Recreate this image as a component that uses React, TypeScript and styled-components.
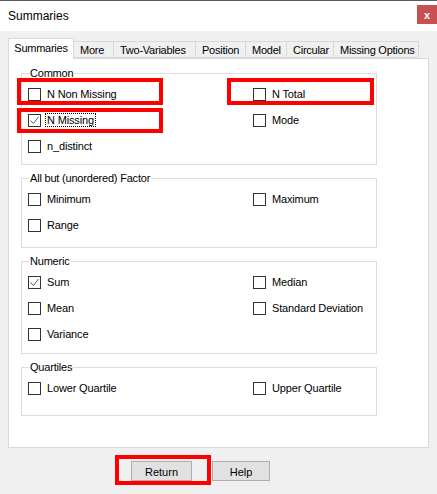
import React from 'react';
import styled, { createGlobalStyle } from 'styled-components';

const GlobalStyle = createGlobalStyle`
  html, body {
    margin: 0;
    padding: 0;
    background: #f0f0f0;
  }
  body {
    font-family: "Liberation Sans", Arial, sans-serif;
    font-size: 11px;
    color: #000;
  }
`;

const Window = styled.div`
  position: relative;
  width: 437px;
  height: 494px;
  box-sizing: border-box;
  border-top: 1px solid #5c5c5c;
  background: #f0f0f0;
  overflow: hidden;
`;

const TitleBar = styled.div`
  height: 30px;
  background: #fff;
  display: flex;
  align-items: center;
  justify-content: space-between;
  padding-left: 8px;
  font-size: 12px;
`;

const CloseButton = styled.div`
  width: 20px;
  height: 19px;
  margin-top: -3px;
  background: #c75050;
  color: #fff;
  font-weight: bold;
  font-size: 11px;
  display: flex;
  align-items: center;
  justify-content: center;
`;

const Body = styled.div`
  padding: 7px 8px 0 8px;
`;

const TabStrip = styled.div`
  display: flex;
  align-items: flex-end;
  height: 20px;
  position: relative;
  z-index: 1;
`;

const Tab = styled.div<{ $w: number; $active?: boolean }>`
  box-sizing: border-box;
  width: ${p => p.$w}px;
  height: ${p => (p.$active ? 21 : 17)}px;
  margin-bottom: ${p => (p.$active ? -1 : 0)}px;
  border: 1px solid #d9d9d9;
  border-bottom: ${p => (p.$active ? 'none' : '1px solid #d9d9d9')};
  border-left: ${p => (p.$active ? '1px solid #d9d9d9' : 'none')};
  background: ${p => (p.$active ? '#fff' : '#f0f0f0')};
  display: flex;
  align-items: center;
  justify-content: ${p => (p.$active ? 'center' : 'flex-start')};
  padding-left: ${p => (p.$active ? 0 : 6)}px;
  padding-bottom: ${p => (p.$active ? 3 : 0)}px;
  white-space: nowrap;
  letter-spacing: -0.25px;
`;

const Panel = styled.div`
  box-sizing: border-box;
  width: 421px;
  height: 390px;
  background: #fff;
  border: 1px solid #d9d9d9;
  padding: 8px 0 0 12px;
  display: flex;
  flex-direction: column;
  gap: 7px;
`;

const Group = styled.fieldset<{ $h: number }>`
  box-sizing: border-box;
  width: 356px;
  height: ${p => p.$h}px;
  margin: 0;
  padding: 2px 6px 0 6px;
  border: 1px solid #dcdcdc;
  min-inline-size: 0;
`;

const Legend = styled.legend`
  padding: 0 1px;
  margin-left: 1px;
  line-height: 12px;
  letter-spacing: -0.2px;
`;

const Grid = styled.div`
  display: grid;
  grid-template-columns: 225px 1fr;
  grid-auto-rows: 26px;
  align-items: center;
`;

const Item = styled.label`
  display: flex;
  align-items: center;
  gap: 5px;
  white-space: nowrap;
`;

const Box = styled.span`
  box-sizing: border-box;
  width: 13px;
  height: 13px;
  border: 1px solid #333;
  background: #fff;
  display: flex;
  align-items: center;
  justify-content: center;
  flex-shrink: 0;
`;

const Label = styled.span<{ $focus?: boolean }>`
  padding: 0 1px;
  line-height: 12px;
  letter-spacing: -0.15px;
  outline: ${p => (p.$focus ? '1px dotted #000' : 'none')};
  outline-offset: 0;
`;

const Footer = styled.div`
  display: flex;
  gap: 20px;
  padding: 13px 0 0 123px;
`;

const Button = styled.div<{ $w: number }>`
  box-sizing: border-box;
  width: ${p => p.$w}px;
  height: 20px;
  background: #e1e1e1;
  border: 1px solid #adadad;
  display: flex;
  align-items: center;
  justify-content: center;
  padding-top: 1px;
`;

const Annotation = styled.div<{ $x: number; $y: number; $w: number; $h: number }>`
  position: absolute;
  left: ${p => p.$x}px;
  top: ${p => p.$y}px;
  width: ${p => p.$w}px;
  height: ${p => p.$h}px;
  box-sizing: border-box;
  border: 4px solid #ff0000;
  pointer-events: none;
`;

const CheckMark = () => (
  <svg width="11" height="11" viewBox="0 0 11 11">
    <path d="M1.5 5.5 L4.5 8.5 L9.5 2" fill="none" stroke="#5a5a5a" strokeWidth="1" />
  </svg>
);

const Check: React.FC<{ label: string; checked?: boolean; focus?: boolean }> = ({ label, checked, focus }) => (
  <Item>
    <Box>{checked && <CheckMark />}</Box>
    <Label $focus={focus}>{label}</Label>
  </Item>
);

const tabs = [
  { label: 'Summaries', w: 66, active: true },
  { label: 'More', w: 40 },
  { label: 'Two-Variables', w: 82 },
  { label: 'Position', w: 50 },
  { label: 'Model', w: 41 },
  { label: 'Circular', w: 47 },
  { label: 'Missing Options', w: 85 },
];

export default function App() {
  return (
    <>
      <GlobalStyle />
      <Window>
        <TitleBar>
          <span>Summaries</span>
          <CloseButton>x</CloseButton>
        </TitleBar>
        <Body>
          <TabStrip>
            {tabs.map(t => (
              <Tab key={t.label} $w={t.w} $active={t.active}>{t.label}</Tab>
            ))}
          </TabStrip>
          <Panel>
            <Group $h={98}>
              <Legend>Common</Legend>
              <Grid>
                <Check label="N Non Missing" />
                <Check label="N Total" />
                <Check label="N Missing" checked focus />
                <Check label="Mode" />
                <Check label="n_distinct" />
              </Grid>
            </Group>
            <Group $h={76}>
              <Legend>All but (unordered) Factor</Legend>
              <Grid>
                <Check label="Minimum" />
                <Check label="Maximum" />
                <Check label="Range" />
              </Grid>
            </Group>
            <Group $h={99}>
              <Legend>Numeric</Legend>
              <Grid>
                <Check label="Sum" checked />
                <Check label="Median" />
                <Check label="Mean" />
                <Check label="Standard Deviation" />
                <Check label="Variance" />
              </Grid>
            </Group>
            <Group $h={55}>
              <Legend>Quartiles</Legend>
              <Grid>
                <Check label="Lower Quartile" />
                <Check label="Upper Quartile" />
              </Grid>
            </Group>
          </Panel>
          <Footer>
            <Button $w={61}>Return</Button>
            <Button $w={58}>Help</Button>
          </Footer>
        </Body>
        <Annotation $x={17} $y={77} $w={146} $h={27} />
        <Annotation $x={17} $y={107} $w={146} $h={25} />
        <Annotation $x={227} $y={77} $w={147} $h={27} />
        <Annotation $x={115} $y={454} $w={96} $h={30} />
      </Window>
    </>
  );
}
